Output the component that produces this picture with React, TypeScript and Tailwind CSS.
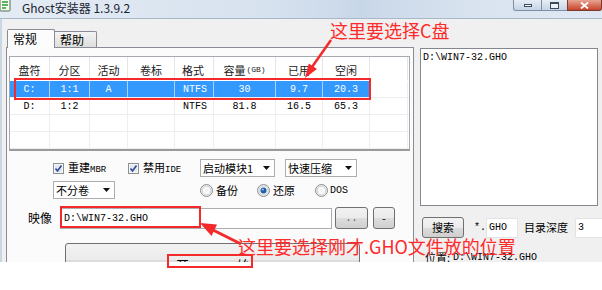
import React from "react";

const MONO = "font-['Liberation_Mono','Noto_Sans_CJK_SC',monospace]";

function Check() {
  return (
    <svg width="11" height="11" viewBox="0 0 11 11" className="shrink-0">
      <rect x="0.5" y="0.5" width="10" height="10" fill="#f4f6f8" stroke="#8e8f8f" />
      <rect x="2" y="2" width="7" height="7" fill="#e3e9ef" />
      <path d="M2.5 5.5 L4.5 8 L8.5 2.5" fill="none" stroke="#2b4a9e" strokeWidth="1.6" />
    </svg>
  );
}

function Radio({ on }: { on?: boolean }) {
  return (
    <svg width="13" height="13" viewBox="0 0 13 13" className="shrink-0">
      <circle cx="6.5" cy="6.5" r="6" fill="#e9ecef" stroke="#8e8f8f" />
      <circle cx="6.5" cy="6.5" r="4.3" fill="#f8f8f8" stroke="#c8ccd0" strokeWidth="0.8" />
      {on && <circle cx="6.5" cy="6.5" r="3" fill="#1f5fa8" />}
      {on && <circle cx="5.8" cy="5.6" r="1.1" fill="#8cc0ef" />}
    </svg>
  );
}

function Arrow() {
  return (
    <svg width="7" height="4" viewBox="0 0 7 4" className="shrink-0">
      <path d="M0 0 L7 0 L3.5 4 Z" fill="#111" />
    </svg>
  );
}

function Combo({ w, text }: { w: string; text: string }) {
  return (
    <div className={`${w} shrink-0 h-[18px] flex items-center justify-between bg-white border border-[#abadb3] pl-[2px] pr-[4px] text-[11px] leading-[14px]`}>
      <span className="whitespace-nowrap">{text}</span>
      <Arrow />
    </div>
  );
}

const BTN =
  "flex items-center justify-center border border-[#707070] rounded-[3px] bg-[linear-gradient(#f2f2f2_0%,#ebebeb_50%,#dddddd_51%,#cfcfcf_100%)]";

const cols = [40, 40, 38, 47, 39, 62, 47, 47, 38];
const header = ["盘符", "分区", "活动", "卷标", "格式", "容量", "已用", "空闲", ""];
const rowC = ["C:", "1:1", "A", "", "NTFS", "30", "9.7", "20.3", ""];
const rowD = ["D:", "1:2", "", "", "NTFS", "81.8", "16.5", "65.3", ""];

function Row({ cells, sel }: { cells: string[]; sel?: boolean }) {
  return (
    <div className="flex h-[17px] border-b border-[#eeeeee]">
      {cells.map((c, i) => (
        <div
          key={i}
          style={{ width: cols[i] }}
          className={`shrink-0 flex items-center ${i === 4 ? "justify-start pl-[8px]" : "justify-center"} ${MONO} text-[10px] ${
            sel && i < 8 ? "bg-[#3399ff] text-white border-r border-[#a9d1fb]" : "text-black border-r border-[#eeeeee]"
          }`}
        >
          {c}
        </div>
      ))}
    </div>
  );
}

export default function App() {
  return (
    <div className="relative w-[602px] h-[290px] bg-white overflow-hidden font-['Noto_Sans_CJK_SC',sans-serif] text-[11px] text-black">
      <div className="flex flex-col h-[262px] overflow-hidden">
        {/* Title bar */}
        <div className="relative h-[19px] shrink-0 flex items-start bg-[linear-gradient(90deg,#e3ebf4_0%,#d7e2ef_45%,#c8d7e8_60%,#dae4f0_80%,#dfe8f2_100%)] border-b border-[#a8b8cb]">
          <svg width="12" height="13" viewBox="0 0 12 13" className="shrink-0 mt-[-1px]">
            <rect x="0" y="0" width="10" height="12" rx="1" fill="#f4f8f2" stroke="#55704d" />
            <path d="M2 3 L8 3 M2 6 L8 6 M2 9 L6 9" stroke="#2f9a35" strokeWidth="1.6" />
          </svg>
          <span className="ml-[10px] mt-[1px] text-[12px] leading-[14px] text-[#1b2430] whitespace-nowrap">Ghost安装器 1.3.9.2</span>
          <div className="ml-auto flex h-[11px]">
            <div className="w-[29px] h-[11px] flex items-center justify-center border border-[#7b8ea6] border-t-0 rounded-bl-[3px] bg-[linear-gradient(#e7eef6,#c6d4e4)]">
              <div className="w-[8px] h-[3px] bg-white border border-[#3b4b5e]" />
            </div>
            <div className="w-[25px] h-[11px] flex items-center justify-center border-b border-[#7b8ea6] bg-[linear-gradient(#e7eef6,#c6d4e4)]">
              <div className="w-[9px] h-[7px] border border-[#3b4b5e] border-t-2 bg-white/60" />
            </div>
            <div className="w-[35px] h-[11px] flex items-center justify-center border border-[#7b3a2e] border-t-0 rounded-br-[3px] bg-[linear-gradient(#e8a493,#c7432b)]">
              <svg width="9" height="7" viewBox="0 0 9 7">
                <path d="M1 0.5 L8 6.5 M8 0.5 L1 6.5" stroke="#fff" strokeWidth="1.8" />
              </svg>
            </div>
          </div>
        </div>

        {/* Body */}
        <div className="flex-1 flex bg-[#f0f0f0] border-l-[2px] border-[#c9d6e4]">
          {/* Left column */}
          <div className="w-[412px] shrink-0 pl-[4px] pt-[10px] flex flex-col">
            <div className="flex items-end h-[18px] ml-[1px] relative z-10">
              <div className="w-[48px] h-[19px] -mb-[1px] bg-[#fcfcfc] border border-[#898c95] border-b-0 rounded-t-[2px] pl-[5px] pt-[1px] text-[12px] leading-[16px]">
                常规
              </div>
              <div className="w-[42px] h-[16px] bg-[linear-gradient(#f4f4f4,#dedede)] border border-[#898c95] border-l-0 border-b-0 rounded-tr-[2px] pl-[5px] text-[12px] leading-[15px]">
                帮助
              </div>
            </div>
            <div className="flex-1 w-[408px] border border-[#898c95] border-b-0 bg-[#fbfbfb] flex flex-col">
              {/* Table */}
              <div className="mt-[8px] ml-[2px] w-[401px] h-[95px] bg-white border border-[#a5a9b0] border-b-2 border-b-[#9a9a9a] overflow-hidden">
                <div className="flex h-[23px]">
                  {header.map((h, i) => (
                    <div
                      key={i}
                      style={{ width: cols[i] }}
                      className={`shrink-0 flex items-center pt-[3px] ${i === 4 ? "justify-start pl-[7px]" : "justify-center"} border-r border-[#e5e5e5] text-[11px] leading-[14px] text-[#1a1a1a]`}
                    >
                      {h}
                      {i === 5 && <span className={`${MONO} text-[8px] ml-[1px]`}>(GB)</span>}
                    </div>
                  ))}
                </div>
                <div className="h-[1px]" />
                <Row cells={rowC} sel />
                <Row cells={rowD} />
                <Row cells={["", "", "", "", "", "", "", "", ""]} />
                <Row cells={["", "", "", "", "", "", "", "", ""]} />
              </div>

              {/* Row 1 */}
              <div className="mt-[8px] h-[18px] flex items-center ml-[46px]">
                <div className="w-[75px] shrink-0 flex items-center">
                  <Check />
                  <span className="ml-[4px] leading-[14px] whitespace-nowrap">
                    重建<span className={`${MONO} text-[9px]`}>MBR</span>
                  </span>
                </div>
                <div className="w-[72px] shrink-0 flex items-center">
                  <Check />
                  <span className="ml-[4px] leading-[14px] whitespace-nowrap">
                    禁用<span className={`${MONO} text-[9px]`}>IDE</span>
                  </span>
                </div>
                <Combo w="w-[75px]" text="启动模块1" />
                <div className="w-[10px] shrink-0" />
                <Combo w="w-[72px]" text="快速压缩" />
              </div>

              {/* Row 2 */}
              <div className="mt-[4px] h-[18px] flex items-center ml-[46px]">
                <Combo w="w-[62px]" text="不分卷" />
                <div className="w-[85px] shrink-0" />
                <div className="w-[57px] shrink-0 flex items-center">
                  <Radio />
                  <span className="ml-[3px]">备份</span>
                </div>
                <div className="w-[58px] shrink-0 flex items-center">
                  <Radio on />
                  <span className="ml-[3px]">还原</span>
                </div>
                <div className="flex items-center">
                  <Radio />
                  <span className={`ml-[2px] ${MONO} text-[10px]`}>DOS</span>
                </div>
              </div>

              {/* Row 3 */}
              <div className="mt-[8px] h-[22px] flex items-center ml-[21px]">
                <span className="w-[32px] shrink-0 text-[12px] leading-[14px]">映像</span>
                <div className={`w-[272px] shrink-0 h-[21px] bg-white border border-[#abadb3] flex items-center pl-[3px] ${MONO} text-[10px]`}>
                  D:\WIN7-32.GHO
                </div>
                <div className={`ml-[3px] w-[33px] h-[22px] shrink-0 ${BTN} ${MONO} text-[10px] text-[#555]`}>..</div>
                <div className={`ml-[5px] w-[22px] h-[22px] shrink-0 ${BTN} text-[11px]`}>-</div>
              </div>

              {/* Row 4 - big button */}
              <div className={`mt-[14px] ml-[58px] w-[295px] h-[34px] ${BTN} items-start justify-start shrink-0`}>
                <span className="ml-[110px] mt-[14px] text-[13px] leading-[14px] tracking-[48px] whitespace-nowrap">开始</span>
              </div>
            </div>
          </div>

          {/* Right column */}
          <div className="flex-1 min-w-0 pt-[29px] pl-[6px] flex flex-col">
            <div className={`w-[178px] h-[158px] shrink-0 bg-white border border-[#828790] pl-[2px] pt-[2px] ${MONO} text-[10px] leading-[14px]`}>
              D:\WIN7-32.GHO
            </div>
            <div className="mt-[11px] h-[21px] flex items-center shrink-0 whitespace-nowrap">
              <div className={`ml-[2px] w-[42px] h-[21px] shrink-0 ${BTN} text-[11px]`}>搜索</div>
              <span className={`ml-[10px] w-[12px] shrink-0 ${MONO} text-[10px]`}>*.</span>
              <div className={`w-[32px] h-[20px] shrink-0 bg-white border border-[#e3e3e3] flex items-center pl-[2px] ${MONO} text-[10px]`}>GHO</div>
              <span className="ml-[6px] shrink-0 text-[11px]">目录深度</span>
              <div className={`ml-[7px] w-[30px] h-[20px] shrink-0 bg-white border border-[#e3e3e3] flex items-center pl-[2px] ${MONO} text-[10px]`}>3</div>
            </div>
            <div className="mt-[12px] ml-[5px] h-[14px] flex items-center shrink-0 whitespace-nowrap">
              <span className="text-[11px]">位置:</span>
              <span className={`ml-[3px] ${MONO} text-[10px]`}>D:\WIN7-32.GHO</span>
            </div>
          </div>
        </div>
      </div>

      {/* Annotations */}
      <div className="absolute left-[14px] top-[78px] w-[357px] h-[22px] border-[2.5px] border-[#f42a2a]" />
      <div className="absolute left-[60px] top-[206px] w-[141px] h-[22px] border-[2.5px] border-[#f42a2a]" />
      <div className="absolute left-[167px] top-[254px] w-[86px] h-[14px] border-[2.5px] border-[#f42a2a]" />

      <svg className="absolute left-0 top-0 pointer-events-none" width="602" height="290" viewBox="0 0 602 290">
        <line x1="331" y1="40" x2="312" y2="67" stroke="#f42a2a" strokeWidth="2.5" />
        <polygon points="305,78 317,69 308.8,63.6" fill="#f42a2a" />
        <line x1="241" y1="244" x2="213" y2="230" stroke="#f42a2a" strokeWidth="3" />
        <polygon points="200,223 217,224.5 211.5,236" fill="#f42a2a" />
      </svg>

      <div className="absolute left-[330px] top-[20px] text-[18px] leading-[20px] text-[#ff2a2a] whitespace-nowrap">
        这里要选择C盘
      </div>
      <div className="absolute left-[238px] top-[236px] text-[18px] leading-[20px] text-[#ff2a2a] whitespace-nowrap">
        这里要选择刚才.GHO文件放的位置
      </div>
    </div>
  );
}
